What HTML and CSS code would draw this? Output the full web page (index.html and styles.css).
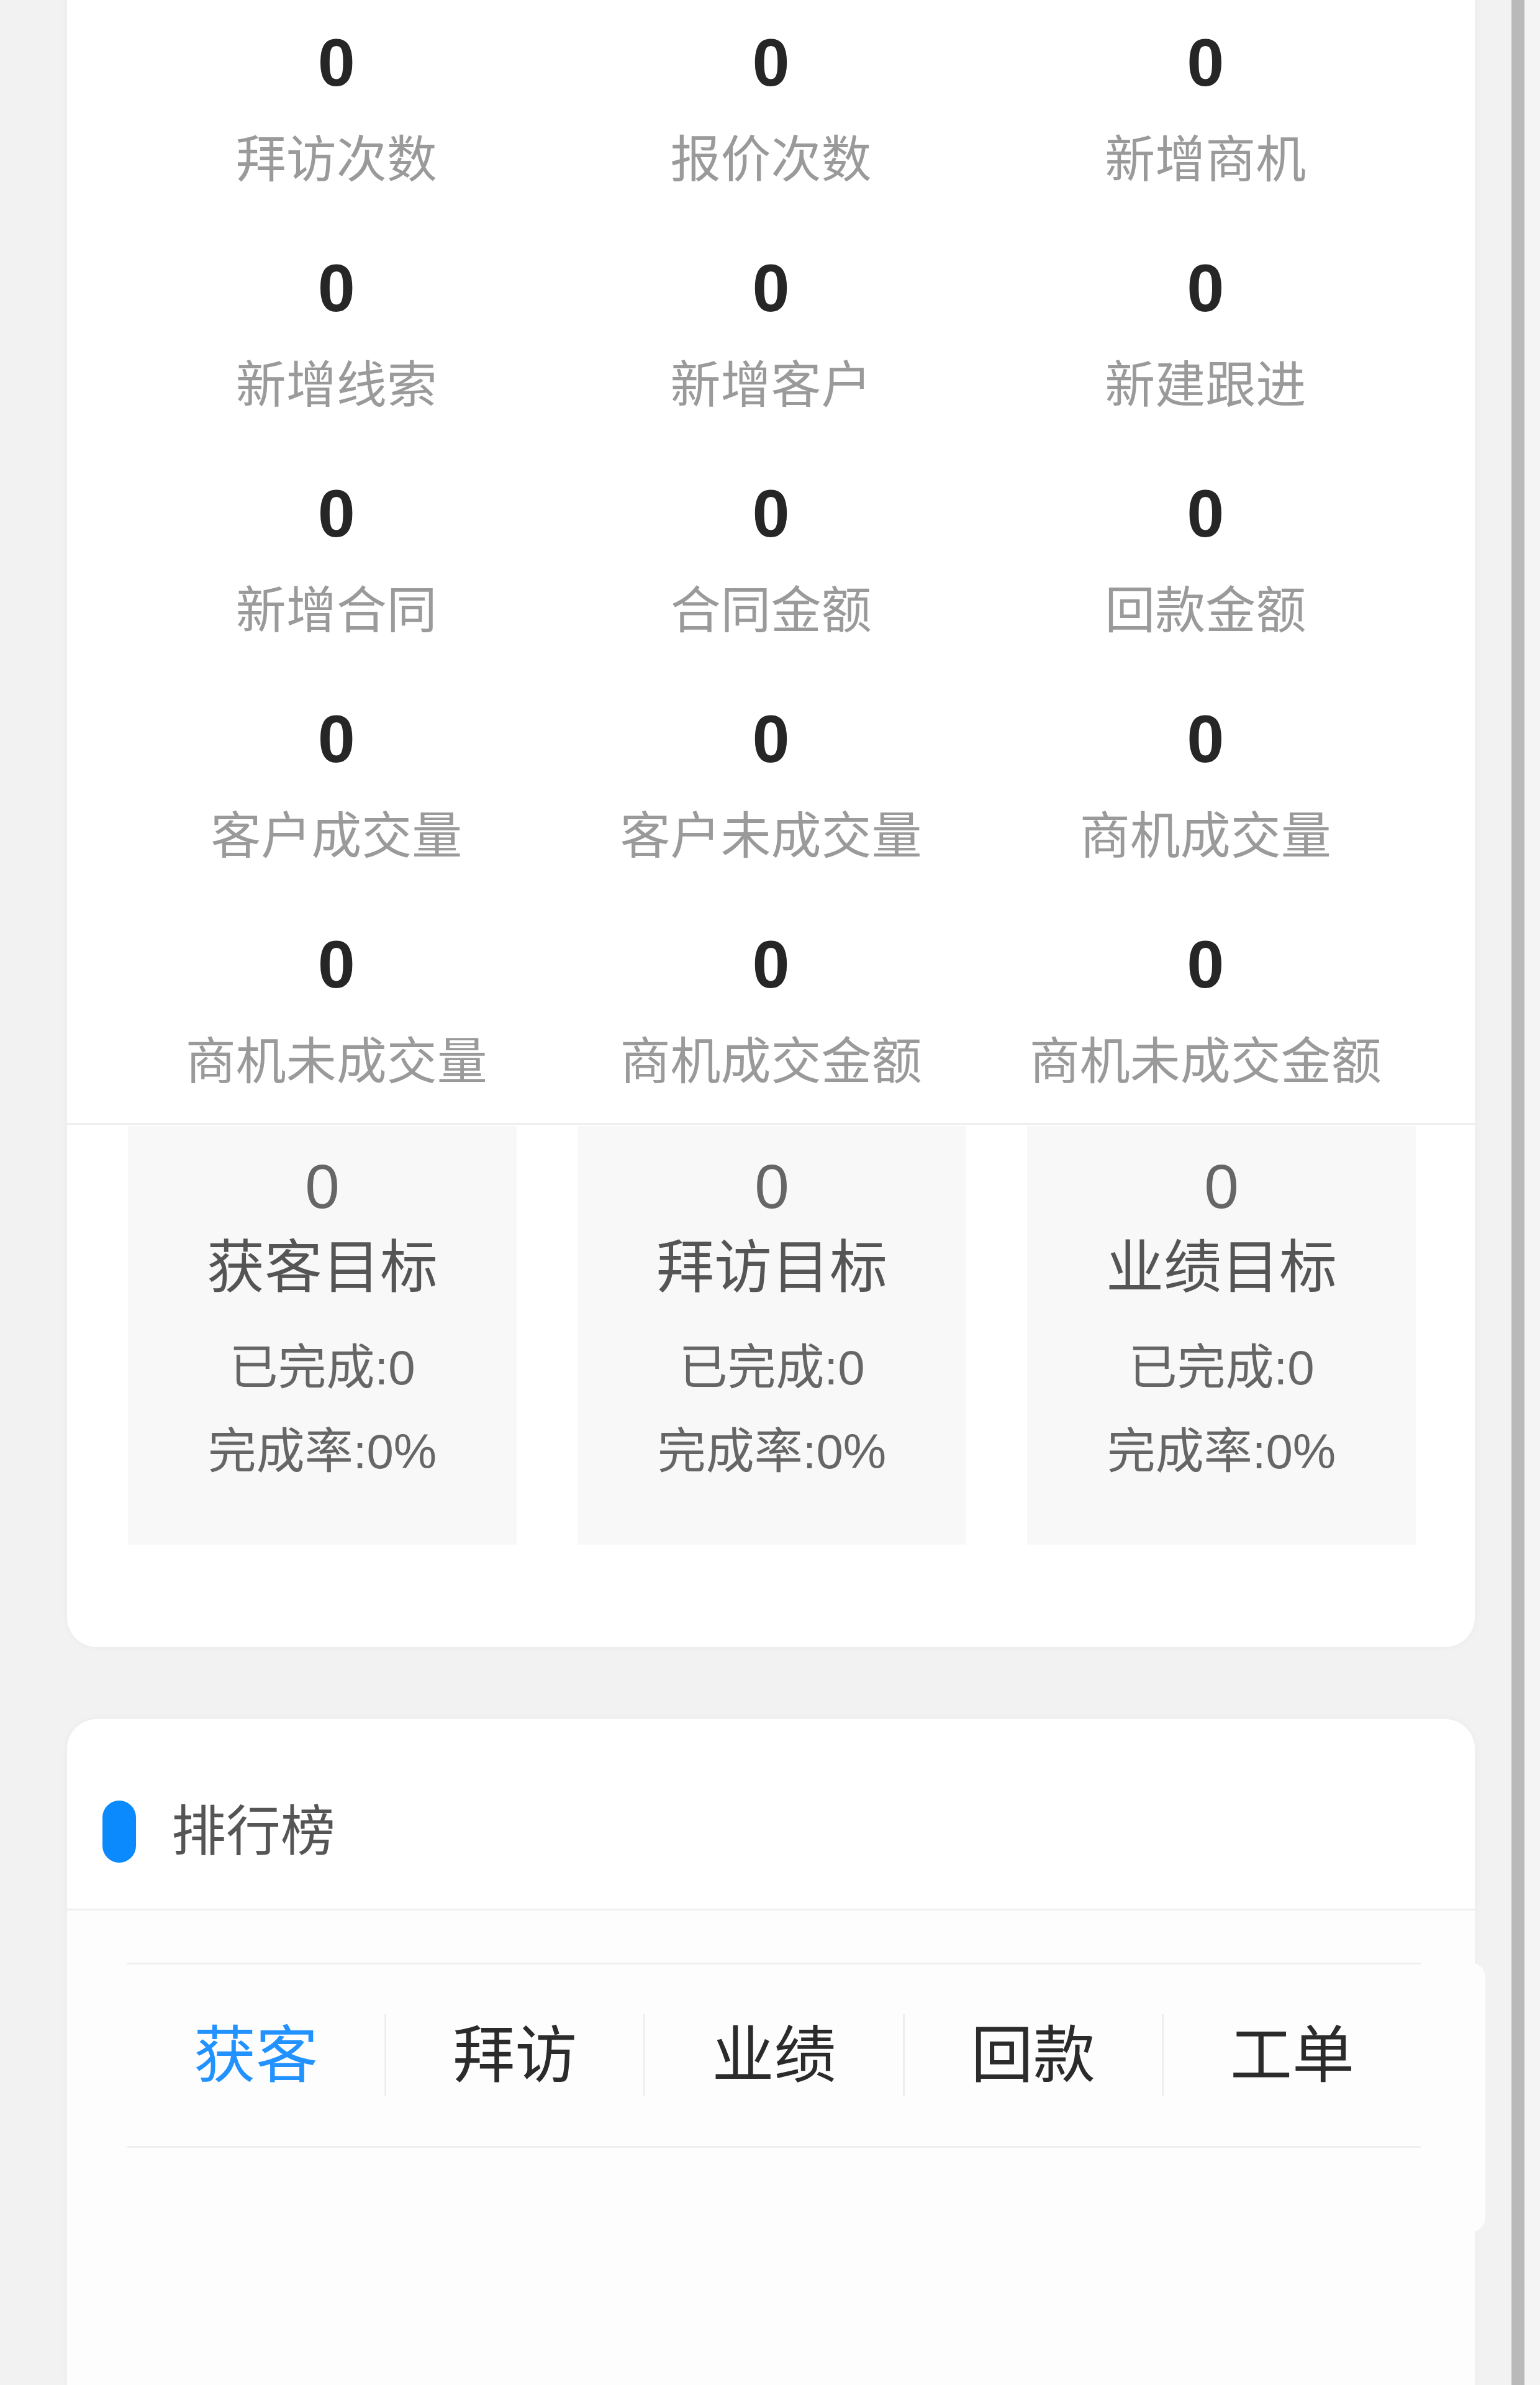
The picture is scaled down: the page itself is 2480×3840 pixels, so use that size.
FILE: index.html
```html
<!DOCTYPE html>
<html lang="zh-CN">
<head>
  <meta charset="UTF-8">
  <meta name="viewport" content="width=device-width, initial-scale=1">
  <title>数据统计</title>
  <link rel="stylesheet" href="styles.css">
</head>
<body>
  <div class="page">

    <div class="card card-stats">
      <div class="stats">
        <div class="stat"><div class="stat-num">0</div><div class="stat-label">拜访次数</div></div>
        <div class="stat"><div class="stat-num">0</div><div class="stat-label">报价次数</div></div>
        <div class="stat"><div class="stat-num">0</div><div class="stat-label">新增商机</div></div>
        <div class="stat"><div class="stat-num">0</div><div class="stat-label">新增线索</div></div>
        <div class="stat"><div class="stat-num">0</div><div class="stat-label">新增客户</div></div>
        <div class="stat"><div class="stat-num">0</div><div class="stat-label">新建跟进</div></div>
        <div class="stat"><div class="stat-num">0</div><div class="stat-label">新增合同</div></div>
        <div class="stat"><div class="stat-num">0</div><div class="stat-label">合同金额</div></div>
        <div class="stat"><div class="stat-num">0</div><div class="stat-label">回款金额</div></div>
        <div class="stat"><div class="stat-num">0</div><div class="stat-label">客户成交量</div></div>
        <div class="stat"><div class="stat-num">0</div><div class="stat-label">客户未成交量</div></div>
        <div class="stat"><div class="stat-num">0</div><div class="stat-label">商机成交量</div></div>
        <div class="stat"><div class="stat-num">0</div><div class="stat-label">商机未成交量</div></div>
        <div class="stat"><div class="stat-num">0</div><div class="stat-label">商机成交金额</div></div>
        <div class="stat"><div class="stat-num">0</div><div class="stat-label">商机未成交金额</div></div>
      </div>

      <div class="targets">
        <div class="target">
          <div class="target-num">0</div>
          <div class="target-title">获客目标</div>
          <div class="target-done">已完成:0</div>
          <div class="target-rate">完成率:0%</div>
        </div>
        <div class="target">
          <div class="target-num">0</div>
          <div class="target-title">拜访目标</div>
          <div class="target-done">已完成:0</div>
          <div class="target-rate">完成率:0%</div>
        </div>
        <div class="target">
          <div class="target-num">0</div>
          <div class="target-title">业绩目标</div>
          <div class="target-done">已完成:0</div>
          <div class="target-rate">完成率:0%</div>
        </div>
      </div>
    </div>

    <div class="card card-rank">
      <div class="card-head">
        <span class="head-mark"></span>
        <span class="head-title">排行榜</span>
      </div>
      <div class="rank-panel">
        <div class="tabs">
          <div class="tab active">获客</div>
          <div class="tab">拜访</div>
          <div class="tab">业绩</div>
          <div class="tab">回款</div>
          <div class="tab">工单</div>
        </div>
      </div>
    </div>

  </div>
  <div class="scroll-bar"></div>
  <div class="scroll-edge"></div>
</body>
</html>
```

FILE: styles.css
```css
html, body { margin: 0; padding: 0; }
body { display: flex; height: 3840px; overflow: hidden; background: #f2f2f2; font-family: "Liberation Sans", "Noto Sans CJK SC", sans-serif; }

.page { flex: 0 0 2433px; box-sizing: border-box; padding: 0 58px 0 108px; }
.scroll-bar { flex: 0 0 22px; background: #b9b9b9; border-left: 2px solid #d2d2d2; box-sizing: border-box; }
.scroll-edge { flex: 1; background: #f4f4f4; }

.card { background: #fff; border-radius: 48px; box-shadow: 0 0 14px rgba(0, 0, 0, 0.035); }

/* stats card */
.card-stats { margin-top: -50px; padding: 71px 0 165px; }
.stats { display: grid; grid-template-columns: repeat(3, 1fr); row-gap: 51px; padding: 0 84px 23px; border-bottom: 3px solid #efefef; }
.stat { text-align: center; }
.stat-num { font-size: 108px; line-height: 160px; font-weight: bold; color: #262626; }
.stat-label { font-size: 81px; line-height: 152px; color: #9a9a9a; white-space: nowrap; }

.targets { display: grid; grid-template-columns: repeat(3, 626px); column-gap: 98px; margin: 2px 0 0 98px; }
.target { background: #f8f8f8; height: 674px; box-sizing: border-box; padding-top: 32px; text-align: center; color: #666; }
.target-num { font-size: 100px; line-height: 130px; }
.target-title { font-size: 93px; line-height: 132px; color: #555; margin-bottom: 28px; }
.target-done { font-size: 78px; line-height: 134px; }
.target-rate { font-size: 78px; line-height: 136px; }

/* rank card, cut off by the bottom of the screen */
.card-rank { margin-top: 116px; padding-bottom: 249px; background: #fdfdfd; border-radius: 48px 48px 0 0; }
.card-head { display: flex; align-items: center; padding: 131px 0 74px 57px; border-bottom: 3px solid #efefef; background: #fff; border-radius: 48px 48px 0 0; }
.head-mark { width: 54px; height: 100px; border-radius: 27px; background: #0a8afc; }
.head-title { margin-left: 57px; font-size: 88px; line-height: 100px; color: #555; }

.rank-panel { margin: 84px -17px 0 97px; padding-right: 104px; padding-bottom: 136px; background: #fdfdfd; border-radius: 0 24px 24px 0; }
.tabs { display: flex; align-items: center; height: 292px; border-top: 3px solid #efefef; border-bottom: 3px solid #efefef; }
.tab { flex: 1; text-align: center; font-size: 100px; line-height: 132px; color: #2b2b2b; border-left: 3px solid #eeeeee; }
.tab:first-child { border-left: none; }
.tab.active { color: #2192ff; }
```
